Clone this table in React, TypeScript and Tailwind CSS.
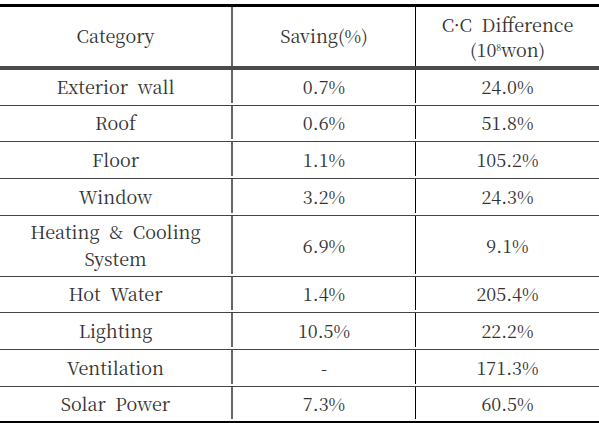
const rows: { name: string; saving: string; diff: string; h: string; last?: boolean }[] = [
  { name: 'Exterior wall', saving: '0.7%', diff: '24.0%', h: 'h-[36px]' },
  { name: 'Roof', saving: '0.6%', diff: '51.8%', h: 'h-[36px]' },
  { name: 'Floor', saving: '1.1%', diff: '105.2%', h: 'h-[37px]' },
  { name: 'Window', saving: '3.2%', diff: '24.3%', h: 'h-[37px]' },
  { name: 'Heating & Cooling\nSystem', saving: '6.9%', diff: '9.1%', h: 'h-[61px]' },
  { name: 'Hot Water', saving: '1.4%', diff: '205.4%', h: 'h-[36px]' },
  { name: 'Lighting', saving: '10.5%', diff: '22.2%', h: 'h-[37px]' },
  { name: 'Ventilation', saving: '-', diff: '171.3%', h: 'h-[37px]' },
  { name: 'Solar Power', saving: '7.3%', diff: '60.5%', h: 'h-[34px]', last: true },
]

export default function App() {
  return (
    <div className="w-[599px] h-[423px] bg-white pt-[4px] overflow-hidden text-[#333] font-['Noto_Serif_CJK_KR'] text-[18px]">
      <div className="border-t-[3px] border-b-[3px] border-black">
        {/* header */}
        <div className="grid grid-cols-[233px_183px_1fr] h-[63px] box-border border-b-[4px] border-[#4a4a4a]">
          <div className="flex items-center justify-center border-r-[2px] border-[#666] pb-[2px]">Category</div>
          <div className="flex items-center justify-center border-r border-black pb-[2px]">Saving(%)</div>
          <div className="flex flex-col items-center justify-center leading-[25px] [word-spacing:5px]">
            <span>C·C Difference</span>
            <span>
              (10<sup className="text-[9px] -top-[6px]">8</sup>won)
            </span>
          </div>
        </div>

        {/* body */}
        {rows.map((r) => (
          <div
            key={r.name}
            className={`grid grid-cols-[233px_183px_1fr] box-border pb-[2px] ${r.h} ${r.last ? '' : 'border-b border-[#444]'}`}
          >
            <div className="flex items-center justify-center text-center whitespace-pre-line leading-[27px] border-r-[2px] border-[#666] [word-spacing:5px]">
              {r.name}
            </div>
            <div className="flex items-center justify-center border-r border-black">{r.saving}</div>
            <div className="flex items-center justify-center">{r.diff}</div>
          </div>
        ))}
      </div>
    </div>
  )
}
